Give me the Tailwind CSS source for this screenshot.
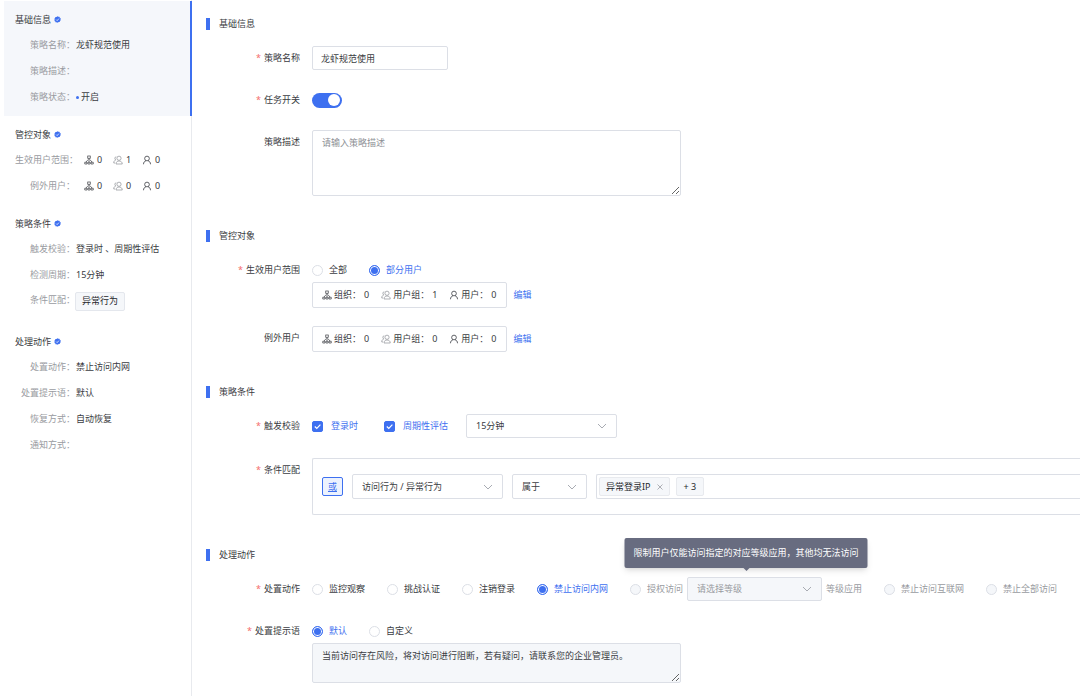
<!DOCTYPE html>
<html lang="zh-CN">
<head>
    <meta charset="UTF-8">
    <meta name="viewport" content="width=device-width, initial-scale=1.0">
    <title>策略配置</title>
    <script src="https://cdn.jsdelivr.net/npm/@tailwindcss/browser@4"></script>
</head>
<body class="flex min-h-screen bg-white font-['Noto_Sans','Noto_Sans_CJK_SC',sans-serif] text-[9px] leading-4 text-[#3a3c42]">

    <!-- shared icons -->
    <svg class="hidden">
        <symbol id="org" viewBox="0 0 20 20" fill="none" stroke="currentColor" stroke-width="1.4">
            <rect x="7.500" y="2" width="5" height="4.500" />
            <path d="M10 6.500v8M8.500 9L4 14M11.500 9l4.500 5" />
            <path d="M1.500 14.500h4.500v3.500H1.500zM7.800 14.500h4.500v3.500H7.800zM14 14.500h4.500v3.500H14z" />
        </symbol>
        <symbol id="group" viewBox="0 0 20 20" fill="none" stroke="currentColor" stroke-width="1.4">
            <circle cx="12" cy="6.500" r="4.200" />
            <path d="M6 18c0-4 2.500-6 6-6s6.500 2 6.500 6z" />
            <path d="M6.500 3.500C3.500 3.500 2.500 8 5.500 10 2.500 11 1.500 13 1.500 16H4" />
        </symbol>
        <symbol id="user" viewBox="0 0 20 20" fill="none" stroke="currentColor" stroke-width="1.600">
            <circle cx="10" cy="7" r="4.700" />
            <path d="M3 18.500c0-4 2-6 5-7M17 18.500c0-4-2-6-5-7" />
        </symbol>
        <symbol id="badge" viewBox="0 0 14 14">
            <path fill="#3e70f0" d="M7 .5l1.700 1.200 2.100-.2.800 1.900 1.800 1.100L13 6.600l.4 2-1.500 1.400-.5 2-2.100.2L7.600 13.500 5.800 12.600l-2.100.2-.9-1.900L1 9.800l.3-2.100L.7 5.600l1.500-1.400.6-2 2.100-.2z" />
            <path fill="none" stroke="#fff" stroke-width="1.500" d="M4.300 7.200l2 2 3.500-4" />
        </symbol>
        <symbol id="down" viewBox="0 0 10 10" fill="none" stroke="#a8abb2" stroke-width="1">
            <path d="M1 3l4 4 4-4" />
        </symbol>
        <symbol id="tick" viewBox="0 0 11 11" fill="none" stroke="#fff" stroke-width="1.200">
            <path d="M2.800 5.500l2 2 3.600-3.800" />
        </symbol>
    </svg>

    <!-- summary -->
    <aside class="w-48 shrink-0 border-r border-[#e8eaee] pt-px pl-1">
        <section class="-mr-px border-r-2 border-[#3e70f0] bg-[#f5f7fb] py-[6px] pl-[11px]">
            <h2 class="flex h-[25px] items-center gap-[3px]">基础信息<svg class="size-[7px]"><use href="#badge" /></svg></h2>
            <dl>
                <div class="flex h-[26px] items-center gap-px"><dt class="w-[60px] text-right whitespace-nowrap text-[#999ba1]">策略名称：</dt><dd>龙虾规范使用</dd></div>
                <div class="flex h-[26px] items-center gap-px"><dt class="w-[60px] text-right whitespace-nowrap text-[#999ba1]">策略描述：</dt><dd></dd></div>
                <div class="flex h-[26px] items-center gap-px"><dt class="w-[60px] text-right whitespace-nowrap text-[#999ba1]">策略状态：</dt><dd class="flex items-center gap-0.5"><span class="size-[3px] rounded-full bg-[#3e70f0]"></span>开启</dd></div>
            </dl>
        </section>
        <section class="py-[6px] pl-[11px]">
            <h2 class="flex h-[25px] items-center gap-[3px]">管控对象<svg class="size-[7px]"><use href="#badge" /></svg></h2>
            <dl>
                <div class="flex h-[26px] items-center gap-[9px]">
                    <dt class="w-[60px] text-right whitespace-nowrap text-[#999ba1]">生效用户范围：</dt>
                    <dd class="flex">
                        <span class="flex w-[29px] items-center gap-[3px]"><svg class="size-[10px]"><use href="#org" /></svg>0</span>
                        <span class="flex w-[29px] items-center gap-[3px]"><svg class="size-[10px] text-[#8d8f95]"><use href="#group" /></svg>1</span>
                        <span class="flex w-[29px] items-center gap-[3px]"><svg class="size-[10px]"><use href="#user" /></svg>0</span>
                    </dd>
                </div>
                <div class="flex h-[26px] items-center gap-[9px]">
                    <dt class="w-[60px] text-right whitespace-nowrap text-[#999ba1]">例外用户：</dt>
                    <dd class="flex">
                        <span class="flex w-[29px] items-center gap-[3px]"><svg class="size-[10px]"><use href="#org" /></svg>0</span>
                        <span class="flex w-[29px] items-center gap-[3px]"><svg class="size-[10px] text-[#8d8f95]"><use href="#group" /></svg>0</span>
                        <span class="flex w-[29px] items-center gap-[3px]"><svg class="size-[10px]"><use href="#user" /></svg>0</span>
                    </dd>
                </div>
            </dl>
        </section>
        <section class="py-[6px] pl-[11px]">
            <h2 class="flex h-[25px] items-center gap-[3px]">策略条件<svg class="size-[7px]"><use href="#badge" /></svg></h2>
            <dl>
                <div class="flex h-[26px] items-center gap-px"><dt class="w-[60px] text-right whitespace-nowrap text-[#999ba1]">触发校验：</dt><dd>登录时 、周期性评估</dd></div>
                <div class="flex h-[26px] items-center gap-px"><dt class="w-[60px] text-right whitespace-nowrap text-[#999ba1]">检测周期：</dt><dd>15分钟</dd></div>
                <div class="flex h-[29px] pt-1"><dt class="w-[60px] text-right whitespace-nowrap text-[#999ba1]">条件匹配：</dt><dd class="h-[19px] rounded-xs border border-[#e4e7ed] bg-[#f5f7fa] px-[6px] text-[#26282c]">异常行为</dd></div>
            </dl>
        </section>
        <section class="py-[6px] pl-[11px]">
            <h2 class="flex h-[25px] items-center gap-[3px]">处理动作<svg class="size-[7px]"><use href="#badge" /></svg></h2>
            <dl>
                <div class="flex h-[26px] items-center gap-px"><dt class="w-[60px] text-right whitespace-nowrap text-[#999ba1]">处置动作：</dt><dd>禁止访问内网</dd></div>
                <div class="flex h-[26px] items-center gap-px"><dt class="w-[60px] text-right whitespace-nowrap text-[#999ba1]">处置提示语：</dt><dd>默认</dd></div>
                <div class="flex h-[26px] items-center gap-px"><dt class="w-[60px] text-right whitespace-nowrap text-[#999ba1]">恢复方式：</dt><dd>自动恢复</dd></div>
                <div class="flex h-[26px] items-center gap-px"><dt class="w-[60px] text-right whitespace-nowrap text-[#999ba1]">通知方式：</dt><dd></dd></div>
            </dl>
        </section>
    </aside>

    <!-- form -->
    <main class="min-w-0 flex-1 pt-3">
        <form class="flex flex-col gap-7">
            <section class="flex flex-col gap-[10px]">
                <h2 class="flex h-6 items-center gap-[9px] pl-[14px]"><span class="h-3 w-1 bg-[#3e70f0]"></span>基础信息</h2>
                <div class="flex flex-col gap-[18px]">
                    <div class="flex gap-3">
                        <label for="name" class="w-[108px] text-right leading-6"><span class="mr-[3px] text-[#f56c6c]">*</span>策略名称</label>
                        <input id="name" type="text" value="龙虾规范使用" class="h-6 w-[136px] rounded-xs border border-[#dcdfe6] px-2">
                    </div>
                    <div class="flex gap-3">
                        <label for="enabled" class="w-[108px] text-right leading-6"><span class="mr-[3px] text-[#f56c6c]">*</span>任务开关</label>
                        <span class="flex items-center"><input id="enabled" type="checkbox" role="switch" checked class="flex h-[15px] w-[30px] appearance-none items-center rounded-full bg-[#b9bdc7] px-0.5 before:size-3 before:rounded-full before:bg-white checked:justify-end checked:bg-[#3e70f0]"></span>
                    </div>
                    <div class="flex gap-3">
                        <label for="desc" class="w-[108px] text-right leading-6">策略描述</label>
                        <textarea id="desc" placeholder="请输入策略描述" class="h-[66px] w-[369px] rounded-xs border border-[#dcdfe6] px-[9px] py-1 placeholder:text-[#8d8f95]"></textarea>
                    </div>
                </div>
            </section>

            <section class="flex flex-col gap-[10px]">
                <h2 class="flex h-6 items-center gap-[9px] pl-[14px]"><span class="h-3 w-1 bg-[#3e70f0]"></span>管控对象</h2>
                <div class="flex flex-col gap-[18px]">
                    <div class="flex gap-3">
                        <span id="scope" class="w-[108px] text-right leading-6"><span class="mr-[3px] text-[#f56c6c]">*</span>生效用户范围</span>
                        <div role="radiogroup" aria-labelledby="scope">
                            <div class="flex h-6 items-center gap-[22px]">
                                <label class="flex items-center gap-[6px]"><input type="radio" name="scope" class="size-[11px] appearance-none rounded-full border border-[#dcdfe6] checked:border-[#3e70f0] checked:bg-[#3e70f0] checked:shadow-[inset_0_0_0_1px_#fff]">全部</label>
                                <label class="flex items-center gap-[6px] text-[#3e70f0]"><input type="radio" name="scope" checked class="size-[11px] appearance-none rounded-full border border-[#dcdfe6] checked:border-[#3e70f0] checked:bg-[#3e70f0] checked:shadow-[inset_0_0_0_1px_#fff]">部分用户</label>
                            </div>
                            <div class="flex items-center gap-[7px]">
                                <div class="flex h-[26px] items-center gap-3 rounded-xs border border-[#dcdfe6] px-[9px]">
                                    <span class="flex items-center"><svg class="mr-0.5 size-[10px]"><use href="#org" /></svg>组织：<span class="ml-[3px]">0</span></span>
                                    <span class="flex items-center"><svg class="mr-0.5 size-[10px] text-[#8d8f95]"><use href="#group" /></svg>用户组：<span class="ml-[3px]">1</span></span>
                                    <span class="flex items-center"><svg class="mr-0.5 size-[10px]"><use href="#user" /></svg>用户：<span class="ml-[3px]">0</span></span>
                                </div>
                                <a href="#" class="text-[#3e70f0]">编辑</a>
                            </div>
                        </div>
                    </div>
                    <div class="flex gap-3">
                        <span class="w-[108px] text-right leading-6">例外用户</span>
                        <div class="flex items-center gap-[7px]">
                            <div class="flex h-[26px] items-center gap-3 rounded-xs border border-[#dcdfe6] px-[9px]">
                                <span class="flex items-center"><svg class="mr-0.5 size-[10px]"><use href="#org" /></svg>组织：<span class="ml-[3px]">0</span></span>
                                <span class="flex items-center"><svg class="mr-0.5 size-[10px] text-[#8d8f95]"><use href="#group" /></svg>用户组：<span class="ml-[3px]">0</span></span>
                                <span class="flex items-center"><svg class="mr-0.5 size-[10px]"><use href="#user" /></svg>用户：<span class="ml-[3px]">0</span></span>
                            </div>
                            <a href="#" class="text-[#3e70f0]">编辑</a>
                        </div>
                    </div>
                </div>
            </section>

            <section class="flex flex-col gap-[10px]">
                <h2 class="flex h-6 items-center gap-[9px] pl-[14px]"><span class="h-3 w-1 bg-[#3e70f0]"></span>策略条件</h2>
                <div class="flex flex-col gap-5">
                    <div class="flex gap-3">
                        <span class="w-[108px] text-right leading-6"><span class="mr-[3px] text-[#f56c6c]">*</span>触发校验</span>
                        <div class="flex items-center">
                            <label class="mr-[26px] flex items-center gap-2 text-[#3e70f0]">
                                <span class="grid size-[11px]"><input type="checkbox" checked class="col-start-1 row-start-1 size-[11px] appearance-none rounded-xs border border-[#dcdfe6] checked:border-[#3e70f0] checked:bg-[#3e70f0]"><svg class="pointer-events-none col-start-1 row-start-1 size-[11px]"><use href="#tick" /></svg></span>登录时
                            </label>
                            <label class="mr-[18px] flex items-center gap-2 text-[#3e70f0]">
                                <span class="grid size-[11px]"><input type="checkbox" checked class="col-start-1 row-start-1 size-[11px] appearance-none rounded-xs border border-[#dcdfe6] checked:border-[#3e70f0] checked:bg-[#3e70f0]"><svg class="pointer-events-none col-start-1 row-start-1 size-[11px]"><use href="#tick" /></svg></span>周期性评估
                            </label>
                            <span class="grid items-center">
                                <select aria-label="评估周期" class="col-start-1 row-start-1 h-6 w-[151px] appearance-none rounded-xs border border-[#dcdfe6] px-[9px]"><option>15分钟</option></select>
                                <svg class="pointer-events-none col-start-1 row-start-1 mr-[10px] size-[10px] justify-self-end"><use href="#down" /></svg>
                            </span>
                        </div>
                    </div>
                    <div class="flex gap-3">
                        <span class="w-[108px] shrink-0 text-right leading-6"><span class="mr-[3px] text-[#f56c6c]">*</span>条件匹配</span>
                        <div class="flex h-[57px] min-w-0 flex-1 items-center gap-[9px] rounded-l-xs border border-r-0 border-[#dcdfe6] pl-[9px]">
                            <button type="button" class="h-[19px] w-[21px] rounded-xs border border-[#3e70f0] bg-[#ecf2fe] text-[#3e70f0] underline">或</button>
                            <span class="grid items-center">
                                <select aria-label="条件类型" class="col-start-1 row-start-1 h-[25px] w-[151px] appearance-none rounded-xs border border-[#dcdfe6] px-[9px]"><option>访问行为 / 异常行为</option></select>
                                <svg class="pointer-events-none col-start-1 row-start-1 mr-[10px] size-[10px] justify-self-end"><use href="#down" /></svg>
                            </span>
                            <span class="grid items-center">
                                <select aria-label="关系" class="col-start-1 row-start-1 h-[25px] w-[75px] appearance-none rounded-xs border border-[#dcdfe6] px-[9px]"><option>属于</option></select>
                                <svg class="pointer-events-none col-start-1 row-start-1 mr-[10px] size-[10px] justify-self-end"><use href="#down" /></svg>
                            </span>
                            <div class="flex h-[25px] min-w-0 flex-1 items-center gap-[6px] rounded-l-xs border border-r-0 border-[#dcdfe6] pl-0.5">
                                <span class="flex h-[19px] items-center gap-[6px] rounded-xs border border-[#e8eaee] bg-[#f5f7fa] px-[6px] text-[#26282c]">异常登录IP
                                    <button type="button" aria-label="移除"><svg viewBox="0 0 6 6" class="size-[6px]" fill="none" stroke="#9a9ca3" stroke-width=".8"><path d="M.5.5l5 5M5.500.5l-5 5" /></svg></button>
                                </span>
                                <span class="flex h-[19px] items-center rounded-xs border border-[#e8eaee] bg-[#f5f7fa] px-[7px] text-[#26282c]">+ 3</span>
                            </div>
                        </div>
                    </div>
                </div>
            </section>

            <section class="flex flex-col gap-[10px]">
                <h2 class="flex h-6 items-center gap-[9px] pl-[14px]"><span class="h-3 w-1 bg-[#3e70f0]"></span>处理动作</h2>
                <div class="flex flex-col gap-[18px]">
                    <div class="flex gap-3">
                        <span id="action" class="w-[108px] shrink-0 text-right leading-6"><span class="mr-[3px] text-[#f56c6c]">*</span>处置动作</span>
                        <div role="radiogroup" aria-labelledby="action" class="flex items-center gap-[22px] whitespace-nowrap">
                            <label class="flex items-center gap-[6px]"><input type="radio" name="action" class="size-[11px] appearance-none rounded-full border border-[#dcdfe6] checked:border-[#3e70f0] checked:bg-[#3e70f0] checked:shadow-[inset_0_0_0_1px_#fff]">监控观察</label>
                            <label class="flex items-center gap-[6px]"><input type="radio" name="action" class="size-[11px] appearance-none rounded-full border border-[#dcdfe6] checked:border-[#3e70f0] checked:bg-[#3e70f0] checked:shadow-[inset_0_0_0_1px_#fff]">挑战认证</label>
                            <label class="flex items-center gap-[6px]"><input type="radio" name="action" class="size-[11px] appearance-none rounded-full border border-[#dcdfe6] checked:border-[#3e70f0] checked:bg-[#3e70f0] checked:shadow-[inset_0_0_0_1px_#fff]">注销登录</label>
                            <label class="flex items-center gap-[6px] text-[#3e70f0]"><input type="radio" name="action" checked class="size-[11px] appearance-none rounded-full border border-[#dcdfe6] checked:border-[#3e70f0] checked:bg-[#3e70f0] checked:shadow-[inset_0_0_0_1px_#fff]">禁止访问内网</label>
                            <div class="relative flex items-center gap-1 text-[#999ba1]">
                                <label class="flex items-center gap-[6px]"><input type="radio" name="action" disabled class="size-[11px] appearance-none rounded-full border border-[#dcdfe6] bg-[#f5f7fa]">授权访问</label>
                                <span class="grid items-center">
                                    <select aria-label="等级" disabled class="col-start-1 row-start-1 h-6 w-[135px] appearance-none rounded-xs border border-[#dcdfe6] bg-[#f5f7fa] px-[9px]"><option>请选择等级</option></select>
                                    <svg class="pointer-events-none col-start-1 row-start-1 mr-[10px] size-[10px] justify-self-end"><use href="#down" /></svg>
                                </span>
                                等级应用
                                <div role="tooltip" class="absolute bottom-full left-1/2 mb-[9px] -translate-x-1/2 rounded-xs bg-[#686c80] px-[9px] py-[7px] text-white shadow-md after:absolute after:top-full after:left-1/2 after:-ml-[3px] after:border-x-[3px] after:border-t-[3px] after:border-x-transparent after:border-t-[#686c80]">限制用户仅能访问指定的对应等级应用，其他均无法访问</div>
                            </div>
                            <label class="flex items-center gap-[6px] text-[#999ba1]"><input type="radio" name="action" disabled class="size-[11px] appearance-none rounded-full border border-[#dcdfe6] bg-[#f5f7fa]">禁止访问互联网</label>
                            <label class="flex items-center gap-[6px] text-[#999ba1]"><input type="radio" name="action" disabled class="size-[11px] appearance-none rounded-full border border-[#dcdfe6] bg-[#f5f7fa]">禁止全部访问</label>
                        </div>
                    </div>
                    <div class="flex gap-3">
                        <span id="prompt" class="w-[108px] text-right leading-6"><span class="mr-[3px] text-[#f56c6c]">*</span>处置提示语</span>
                        <div role="radiogroup" aria-labelledby="prompt">
                            <div class="flex h-6 items-center gap-[22px]">
                                <label class="flex items-center gap-[6px] text-[#3e70f0]"><input type="radio" name="prompt" checked class="size-[11px] appearance-none rounded-full border border-[#dcdfe6] checked:border-[#3e70f0] checked:bg-[#3e70f0] checked:shadow-[inset_0_0_0_1px_#fff]">默认</label>
                                <label class="flex items-center gap-[6px]"><input type="radio" name="prompt" class="size-[11px] appearance-none rounded-full border border-[#dcdfe6] checked:border-[#3e70f0] checked:bg-[#3e70f0] checked:shadow-[inset_0_0_0_1px_#fff]">自定义</label>
                            </div>
                            <textarea aria-label="提示语内容" readonly class="block h-10 w-[369px] rounded-xs border border-[#dcdfe6] bg-[#f5f7fa] px-[9px] py-1">当前访问存在风险，将对访问进行阻断，若有疑问，请联系您的企业管理员。</textarea>
                        </div>
                    </div>
                </div>
            </section>
        </form>
    </main>
</body>
</html>
